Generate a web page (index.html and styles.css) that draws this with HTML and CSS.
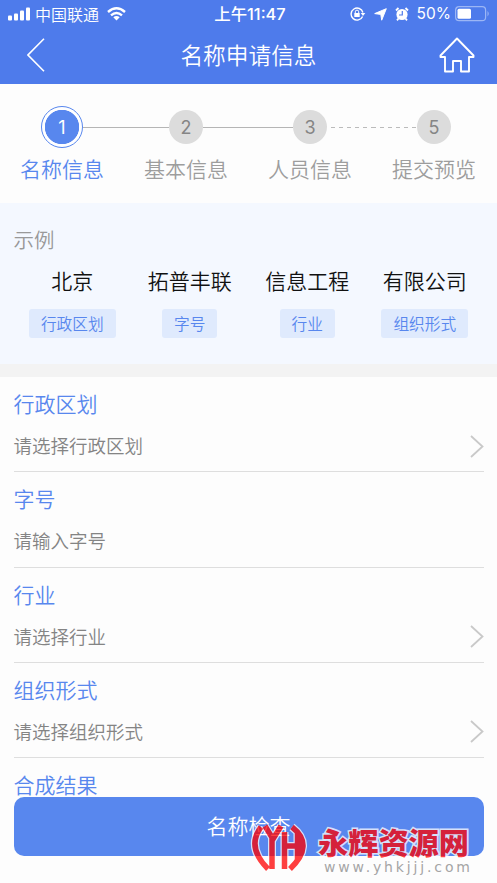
FILE: index.html
```html
<!DOCTYPE html>
<html lang="zh-CN">
<head>
<meta charset="utf-8">
<meta name="viewport" content="width=device-width, initial-scale=1">
<title>名称申请信息</title>
<link rel="stylesheet" href="styles.css">
</head>
<body>
<div class="screen">
  <header class="header">
    <div class="status">
      <div class="status-left">
        <svg class="signal" width="23" height="14" viewBox="0 0 23 14" fill="#fff"><rect x="0" y="8.5" width="4" height="5" rx="1"/><rect x="6" y="6.500" width="4" height="7" rx="1"/><rect x="12" y="3.500" width="4" height="10" rx="1"/><rect x="18" y="0.500" width="4" height="13" rx="1"/></svg>
        <span>中国联通</span>
        <svg class="wifi" width="19" height="14" viewBox="0 0 19 14" fill="none" stroke="#fff" stroke-width="2.4"><path d="M1 5Q9.500-2.500 18 5M4 8.300Q9.500 3.500 15 8.300"/><path d="M6.300 10.300Q9.500 7.600 12.700 10.300L9.500 13.500Z" fill="#fff" stroke="none"/></svg>
      </div>
      <div class="time">上午11:47</div>
      <div class="status-right">
        <svg width="16" height="14" viewBox="0 0 16 14" fill="none" stroke="#fff" stroke-width="1.400"><path d="M12.600 9.500A6 6 0 1 1 12.900 5.500"/><path d="M10.700 6H15.300L13 9Z" fill="#fff" stroke="none"/><rect x="4.300" y="6" width="5.400" height="4" fill="#fff" stroke="none"/><path d="M5.300 6V4.800a1.700 1.700 0 0 1 3.400 0V6" stroke-width="1"/></svg>
        <svg width="13" height="13" viewBox="0 0 13 13" fill="#fff" stroke="#fff" stroke-linejoin="round"><path d="M12.300.7L7.700 12.200L6.800 6.400L.7 5.600Z"/></svg>
        <svg width="14" height="14" viewBox="0 0 14 14" fill="none" stroke="#fff"><circle cx="7" cy="7.500" r="5.600" fill="#fff" stroke="none"/><path d="M1 3.500L3.500 1M10.500 1L13 3.500M3.500 11.500L2 13.300M10.500 11.500L12 13.300" stroke-width="1.800"/><path d="M7.300 4V8H4" stroke="#4e7beb" stroke-width="1.200"/></svg>
        <span class="percent">50%</span>
        <svg width="35" height="16" viewBox="0 0 35 16"><rect x=".6" y=".7" width="30" height="14" rx="3.500" fill="none" stroke="#9cb6f5" stroke-width="1.200"/><rect x="2.500" y="2.700" width="13.500" height="10" rx="1.500" fill="#fff"/><path d="M32.500 5Q35 7.700 32.500 10.500Z" fill="#9cb6f5"/></svg>
      </div>
    </div>
    <nav class="nav">
      <svg class="back" width="18" height="34" viewBox="0 0 18 34" fill="none" stroke="#fff" stroke-width="1.600"><path d="M17 .8L1 17L17 33.200"/></svg>
      <h1>名称申请信息</h1>
      <svg class="home" width="36" height="36" viewBox="0 0 36 36" fill="none" stroke="#fff" stroke-width="1.900" stroke-linejoin="round"><path d="M18 1.500L34.500 18.500V20H30V34.500H22V24H14V34.500H6V20H1.500V18.500Z"/></svg>
    </nav>
  </header>

  <ol class="steps">
    <li class="step active"><div class="track"><i class="line none"></i><b>1</b><i class="line"></i></div><span>名称信息</span></li>
    <li class="step"><div class="track"><i class="line"></i><b>2</b><i class="line"></i></div><span>基本信息</span></li>
    <li class="step"><div class="track"><i class="line"></i><b>3</b><i class="line dash start"></i></div><span>人员信息</span></li>
    <li class="step"><div class="track"><i class="line dash end"></i><b>5</b><i class="line none"></i></div><span>提交预览</span></li>
  </ol>

  <section class="example">
    <h2>示例</h2>
    <div class="parts">
      <div class="part"><p>北京</p><span>行政区划</span></div>
      <div class="part"><p>拓普丰联</p><span>字号</span></div>
      <div class="part"><p>信息工程</p><span>行业</span></div>
      <div class="part"><p>有限公司</p><span>组织形式</span></div>
    </div>
  </section>

  <main class="form">
    <div class="field"><label>行政区划</label><div class="value"><span>请选择行政区划</span><svg class="arrow" width="14" height="23" viewBox="0 0 14 23"><path d="M1 1L12.500 11.500L1 22"/></svg></div></div>
    <div class="field"><label>字号</label><div class="value"><span>请输入字号</span></div></div>
    <div class="field"><label>行业</label><div class="value"><span>请选择行业</span><svg class="arrow" width="14" height="23" viewBox="0 0 14 23"><path d="M1 1L12.500 11.500L1 22"/></svg></div></div>
    <div class="field"><label>组织形式</label><div class="value"><span>请选择组织形式</span><svg class="arrow" width="14" height="23" viewBox="0 0 14 23"><path d="M1 1L12.500 11.500L1 22"/></svg></div></div>
    <div class="field"><label>合成结果</label></div>
  </main>

  <button class="submit">名称检查</button>

  <svg class="brand" width="240" height="68" viewBox="0 0 240 68">
    <g class="halo"><path d="M16 12Q1 32 23 54M47 12Q70 30 45 54M20 11L28 24L36 11M27 23V54M39.500 17V54M39.500 31H52M52.500 17V45"/></g>
    <g class="mark"><path d="M16 12Q1 32 23 54M47 12Q70 30 45 54M20 11L28 24L36 11M27 23V54M39.500 17V54M39.500 31H52M52.500 17V45"/></g>
    <text class="brand-name" x="73" y="39" textLength="151" lengthAdjust="spacingAndGlyphs">永辉资源网</text>
    <text class="brand-url" x="79" y="57" textLength="146">www.yhkjjj.com</text>
  </svg>
</div>
</body>
</html>
```
FILE: styles.css
```css
* { box-sizing: border-box; margin: 0; padding: 0; }
body { background: #fdfdfd; font-family: "Noto Sans CJK SC", sans-serif; font-weight: 350; }
.screen { position: relative; width: 497px; height: 883px; overflow: hidden; }
.header { height: 83.5px; background: #4e7beb; color: #fff; }
.status { display: grid; grid-template-columns: 1fr auto 1fr; align-items: center; height: 28px; padding: 0 7px 0 8px; font-size: 16px; line-height: 26px; }
.status-left, .status-right { display: flex; align-items: center; }
.status-left { gap: 4px; }
.wifi { margin-left: 4px; }
.time { padding-left: 2px; font-family: Inter, "Noto Sans CJK SC", sans-serif; font-weight: 500; font-size: 16.4px; line-height: 28px; }
.status-right { justify-content: flex-end; gap: 8px; }
.percent { font-family: Inter, sans-serif; font-weight: 400; font-size: 15.5px; line-height: 28px; }
.status-right .percent + svg { margin-left: -4px; }
.nav { display: grid; grid-template-columns: 60px 1fr 60px; align-items: center; height: 54px; }
.back { margin-left: 27px; }
.home { margin-left: 2px; }
h1 { font-size: 22.7px; font-weight: 350; line-height: 54px; text-align: center; }

.steps { display: flex; width: 496px; height: 119.5px; padding-top: 22px; list-style: none; }
.step { flex: 1; text-align: center; color: #9d9d9d; }
.track { display: flex; align-items: center; height: 43px; }
.track b { display: flex; align-items: center; justify-content: center; width: 34.5px; height: 34.5px; border-radius: 50%; background: #dcdcdc; color: #858585; font: 400 18px Inter, sans-serif; }
.line { flex: 1; height: 1px; background: #b5b5b5; }
.line.none { background: none; }
.dash.start { background: repeating-linear-gradient(90deg, transparent 0 4px, #bbb 4px 8px); }
.dash.end { background: repeating-linear-gradient(90deg, #bbb 0 4px, transparent 4px 8px); }
.step span { display: block; font-size: 21px; line-height: 30px; margin-top: 4px; }
.step.active { color: #5887ee; }
.active .track b { width: 42px; height: 42px; border: 1.5px solid #5887ee; background: radial-gradient(circle, #5887ee 16.8px, #fff 17.5px); color: #fff; }

.example { height: 174px; padding: 21px 13.5px 0; background: #f4f8ff; border-bottom: 13px solid #f3f3f3; }
h2 { font-size: 20.5px; font-weight: 350; line-height: 30px; color: #999; }
.parts { display: flex; }
.part { flex: 1; text-align: center; }
.part p { margin-top: 11px; font-size: 21px; line-height: 30px; color: #111; }
.part span { display: inline-block; margin-top: 14px; padding: 0 12px; border-radius: 3px; background: #dfeafd; color: #5887ee; font-size: 15.7px; line-height: 29px; vertical-align: top; }

.form { padding: 0 13.5px; }
.field { height: 95.3px; padding-top: 11px; border-bottom: 1.5px solid #dedede; }
.field:last-child { border: 0; }
.field label { display: block; font-size: 21px; line-height: 30px; color: #5887ee; }
.value { display: flex; justify-content: space-between; align-items: center; height: 30px; margin-top: 12px; font-size: 18.5px; line-height: 30px; color: #848484; }
.arrow { fill: none; stroke: #c9c9c9; stroke-width: 1.8; margin-top: 2px; }

.submit { position: absolute; left: 13.5px; top: 796.5px; width: 470px; height: 59.5px; padding-bottom: 2px; border: 0; border-radius: 10px; background: #5887ee; color: #fff; font: 350 21px "Noto Sans CJK SC", sans-serif; }
.brand { position: absolute; left: 245px; top: 815px; opacity: .75; }
.mark, .halo { fill: none; stroke: #f00; stroke-width: 5.5; }
.halo { stroke: #fff; stroke-width: 8; }
.brand-name { font: 900 30px "Noto Sans CJK SC", sans-serif; fill: #f00; stroke: #fff; stroke-width: 3px; paint-order: stroke; }
.brand-url { font: 400 14px "DejaVu Sans", sans-serif; fill: #888; }
```
